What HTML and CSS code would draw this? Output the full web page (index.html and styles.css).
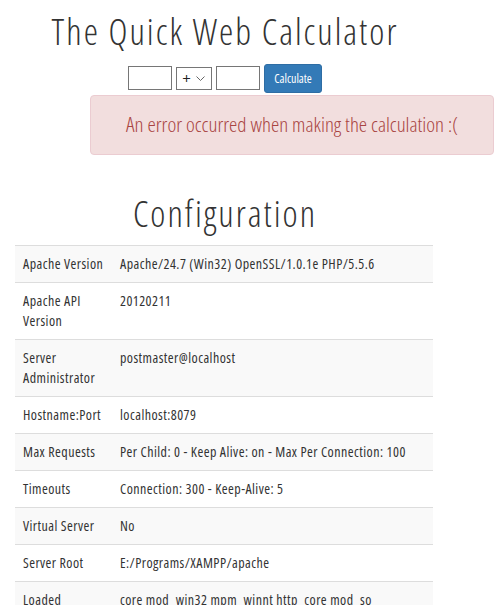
FILE: index.html
```html
<!DOCTYPE html>
<html lang="en">
<head>
    <meta charset="UTF-8">
    <meta name="viewport" content="width=device-width, initial-scale=1.0">
    <title>The Quick Web Calculator</title>
    <link rel="stylesheet" href="styles.css">
</head>
<body>
    <div class="page">
        <h1 class="title">The Quick Web Calculator</h1>

        <form class="calc" id="calcForm">
            <input type="text" class="num" id="left">
            <span class="op-wrap">
                <select class="op" id="op">
                    <option>+</option>
                    <option>-</option>
                    <option>*</option>
                    <option>/</option>
                </select>
                <svg class="op-arrow" width="9" height="5" viewBox="0 0 9 5">
                    <path d="M0.5 0.5 L4.5 4.5 L8.5 0.5" fill="none" stroke="#666" stroke-width="1"/>
                </svg>
            </span>
            <input type="text" class="num" id="right">
            <button type="submit" class="btn">Calculate</button>
        </form>

        <div class="alert">An error occurred when making the calculation :(</div>

        <h1 class="title section">Configuration</h1>

        <table class="config">
            <tr><td class="key">Apache Version</td><td>Apache/24.7 (Win32) OpenSSL/1.0.1e PHP/5.5.6</td></tr>
            <tr><td class="key">Apache API Version</td><td>20120211</td></tr>
            <tr><td class="key">Server Administrator</td><td>postmaster@localhost</td></tr>
            <tr><td class="key">Hostname:Port</td><td>localhost:8079</td></tr>
            <tr><td class="key">Max Requests</td><td>Per Child: 0 - Keep Alive: on - Max Per Connection: 100</td></tr>
            <tr><td class="key">Timeouts</td><td>Connection: 300 - Keep-Alive: 5</td></tr>
            <tr><td class="key">Virtual Server</td><td>No</td></tr>
            <tr><td class="key">Server Root</td><td>E:/Programs/XAMPP/apache</td></tr>
            <tr><td class="key">Loaded Modules</td><td>core mod_win32 mpm_winnt http_core mod_so mod_access_compat mod_actions mod_alias mod_allowmethods mod_asis mod_auth_basic</td></tr>
        </table>
    </div>
</body>
</html>
```

FILE: styles.css
```css
body {
    margin: 0;
    font-family: "Open Sans", sans-serif;
    font-stretch: 75%;
    font-size: 14px;
    line-height: 20px;
    letter-spacing: 0.45px;
    color: #333;
    background-color: #fff;
}
.page {
    width: 450px;
}
.title {
    margin: 12px 0 0;
    font-size: 36px;
    font-weight: 300;
    letter-spacing: 2px;
    line-height: 1.1;
    text-align: center;
}
.title.section {
    margin-top: 39px;
}

/* calculator row */
.calc {
    display: flex;
    justify-content: center;
    align-items: center;
    gap: 4px;
    margin-top: 12px;
}
.num {
    width: 44px;
    height: 24px;
    box-sizing: border-box;
    border: 1px solid #767676;
    padding: 0 4px;
    font-family: inherit;
}
.op-wrap {
    position: relative;
    display: flex;
}
.op {
    appearance: none;
    width: 36px;
    height: 23px;
    box-sizing: border-box;
    padding: 0 0 0 5px;
    border: 1px solid #767676;
    border-radius: 0;
    background-color: #fff;
    font-family: "Open Sans", sans-serif;
    font-size: 15px;
    color: #222;
}
.op-arrow {
    position: absolute;
    top: 9px;
    right: 7px;
    pointer-events: none;
}
.btn {
    height: 29px;
    padding: 0 9px;
    border: 1px solid #2e6da4;
    border-radius: 3px;
    background-color: #337ab7;
    color: #fff;
    font-family: "Open Sans", sans-serif;
    font-stretch: 75%;
    font-size: 12px;
    letter-spacing: 0;
    cursor: pointer;
}
.btn:hover {
    background-color: #286090;
}

/* error box */
.alert {
    margin: 2px 0 0 90px;
    width: 404px;
    box-sizing: border-box;
    height: 60px;
    padding: 14px 10px 0;
    border: 1px solid #ebccd1;
    border-radius: 4px;
    background-color: #f2dede;
    color: #a94442;
    font-weight: 300;
    font-size: 21px;
    line-height: 28px;
    letter-spacing: 0;
    text-align: center;
}

/* server info table */
.config {
    width: 418px;
    margin: 12px 0 0 15px;
    border-collapse: collapse;
}
.config td {
    padding: 8px;
    border-top: 1px solid #ddd;
    vertical-align: top;
}
.config tr:nth-child(odd) {
    background-color: #f9f9f9;
}
.config .key {
    width: 81px;
}
```
